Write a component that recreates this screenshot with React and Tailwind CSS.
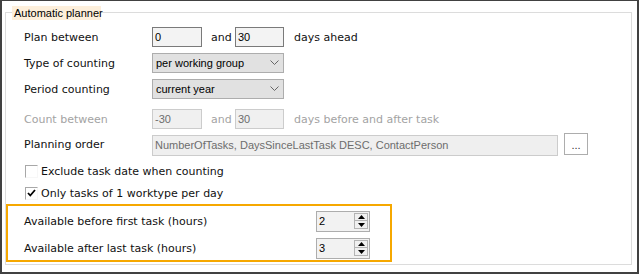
const LABEL = { fontFamily: '"DejaVu Sans", Verdana, sans-serif' };

function Label({ children, disabled }) {
  return (
    <span className={`block text-[11px] leading-[13px] whitespace-nowrap ${disabled ? 'text-[#a3a3a3]' : 'text-[#111]'}`} style={LABEL}>
      {children}
    </span>
  );
}

function Field({ value, width, disabled }) {
  return (
    <div
      className={`h-[20px] flex items-center pl-[2px] font-['Liberation_Sans',Arial,sans-serif] text-[11px] border ${
        disabled ? 'border-[#cccccc] bg-[#f0f0f0] text-[#6d6d6d]' : 'border-[#7a7a7a] bg-[#f3f3f3] text-black'
      } ${width}`}
    >
      {value}
    </div>
  );
}

function Select({ value }) {
  return (
    <div className="w-[132px] h-[20px] flex items-center justify-between pl-[3px] pr-[4px] border border-[#adadad] bg-[#e1e1e1] font-['Liberation_Sans',Arial,sans-serif] text-[11px] text-black">
      <span>{value}</span>
      <svg width="9" height="6" viewBox="0 0 9 6">
        <polyline points="0.5,0.5 4.5,4.5 8.5,0.5" fill="none" stroke="#666" strokeWidth="1" />
      </svg>
    </div>
  );
}

function Checkbox({ checked, label }) {
  return (
    <div className="flex items-center h-[14px] pl-[19px] mt-[8px]">
      <div className="w-[13px] h-[13px] border-t border-l border-[#a8a8a8] border-r border-b border-r-[#f7f7f7] border-b-[#f7f7f7] flex items-center justify-center bg-white">
        {checked && (
          <svg width="9" height="8" viewBox="0 0 9 8">
            <polyline points="1,4 3.3,6.5 8,1" fill="none" stroke="#000" strokeWidth="1.8" />
          </svg>
        )}
      </div>
      <span className="ml-[3px]">
        <Label>{label}</Label>
      </span>
    </div>
  );
}

function Spinner({ value }) {
  return (
    <div className="w-[54px] h-[21px] border border-[#adadad] bg-[#f2f2f2] flex justify-between">
      <span className="pl-[2px] pt-[2px] font-['Liberation_Sans',Arial,sans-serif] text-[11px] leading-[15px] text-black">{value}</span>
      <div className="mt-[1px] mr-[1px] w-[14px] h-[16px] flex flex-col border border-[#b4b4b4]">
        <div className="h-[7px] flex items-center justify-center border-b border-[#b4b4b4] bg-[#f0f0f0]">
          <svg width="7" height="4" viewBox="0 0 7 4"><polygon points="0,4 7,4 3.5,0" fill="#000" /></svg>
        </div>
        <div className="flex-1 flex items-center justify-center bg-[#f0f0f0]">
          <svg width="7" height="4" viewBox="0 0 7 4"><polygon points="0,0 7,0 3.5,4" fill="#000" /></svg>
        </div>
      </div>
    </div>
  );
}

function Row({ label, disabled, className = '', children }) {
  return (
    <div className={`flex items-center h-[20px] pl-[18px] ${className}`}>
      <div className="w-[128px]">
        <Label disabled={disabled}>{label}</Label>
      </div>
      {children}
    </div>
  );
}

export default function App() {
  return (
    <div className="w-[639px] h-[274px] bg-white border-[#414141] border-t border-x-2 border-b-2 overflow-hidden leading-none">
      <div className="relative mt-[11px] ml-[3px] mr-[5px] h-[253px] border border-[#dcdcdc]">
        <div className="absolute left-[6px] top-[-7px] h-[14px] w-[89px] bg-[#fdefdb] pl-[2px] flex items-center whitespace-nowrap font-['Liberation_Sans',Arial,sans-serif] text-[11px] text-black">
          Automatic planner
        </div>

        <Row label="Plan between" className="mt-[14px]">
          <Field value="0" width="w-[50px]" />
          <span className="w-[33px] pl-[9px]"><Label>and</Label></span>
          <Field value="30" width="w-[49px]" />
          <span className="pl-[10px]"><Label>days ahead</Label></span>
        </Row>

        <Row label="Type of counting" className="mt-[6px]">
          <Select value="per working group" />
        </Row>

        <Row label="Period counting" className="mt-[6px]">
          <Select value="current year" />
        </Row>

        <Row label="Count between" disabled className="mt-[10px]">
          <Field value="-30" width="w-[50px]" disabled />
          <span className="w-[33px] pl-[9px]"><Label disabled>and</Label></span>
          <Field value="30" width="w-[49px]" disabled />
          <span className="pl-[10px]"><Label disabled>days before and after task</Label></span>
        </Row>

        <div className="flex items-start h-[23px] pl-[18px] mt-[4px]">
          <div className="w-[128px] h-[23px] flex items-center">
            <Label>Planning order</Label>
          </div>
          <div className="mt-[2px] w-[406px] h-[21px] flex items-center pl-[2px] border border-[#cccccc] bg-[#efefef] font-['Liberation_Sans',Arial,sans-serif] text-[11px] text-[#6d6d6d]">
            NumberOfTasks, DaysSinceLastTask DESC, ContactPerson
          </div>
          <div className="ml-[6px] w-[24px] h-[22px] border border-[#adadad] bg-white flex items-center justify-center font-['Liberation_Sans',Arial,sans-serif] text-[11px] text-[#333] pt-[3px]">
            ...
          </div>
        </div>

        <Checkbox label="Exclude task date when counting" />
        <Checkbox checked label="Only tasks of 1 worktype per day" />

        <div className="mt-[4px] w-[386px] h-[58px] border-2 border-[#f6a800] pt-[5px] flex flex-col gap-[6px]">
          <div className="flex items-center pl-[16px]">
            <div className="w-[292px]"><Label>Available before first task (hours)</Label></div>
            <Spinner value="2" />
          </div>
          <div className="flex items-center pl-[16px]">
            <div className="w-[292px]"><Label>Available after last task (hours)</Label></div>
            <Spinner value="3" />
          </div>
        </div>
      </div>
    </div>
  );
}
